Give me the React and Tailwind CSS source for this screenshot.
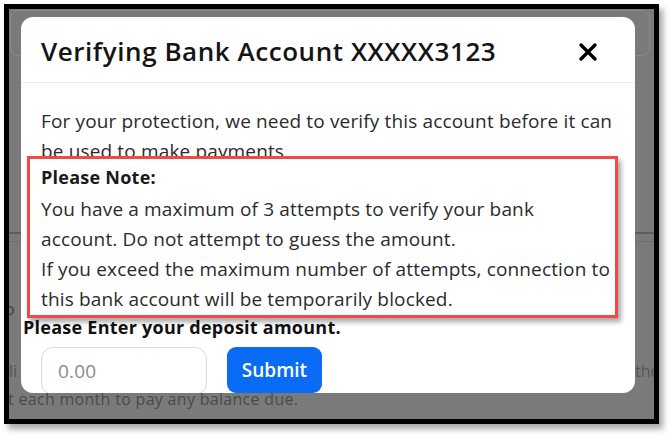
import React from 'react';

const font = { fontFamily: '"Open Sans", Lato, sans-serif' };

const Backdrop = () => (
  <div className="absolute inset-0 bg-[#7a7a7a] text-[16px]">
    {/* faint page content behind the overlay */}
    <div className="absolute left-[1px] top-[1px] w-[640px] h-[46px] rounded-[8px] border border-[#8a8a8a]" />
    <div className="absolute left-0 right-0 top-[223px] h-[2px] bg-[#5e5e5e]" />
    <div className="absolute left-0 right-0 top-[232px] h-[1px] bg-[#6e6e6e]" />
    <span className="absolute left-[-4px] top-[288px] text-[#3f3f3f]">o</span>
    <span className="absolute left-[0px] top-[350px] text-[#555]">li</span>
    <span className="absolute left-[626px] top-[350px] text-[#555]">tho</span>
    <span className="absolute left-[-1px] top-[378px] text-[#4a4a4a] tracking-[0.3px]">
      t each month to pay any balance due.
    </span>
  </div>
);

const CloseIcon = () => (
  <svg width="20" height="20" viewBox="0 0 20 20" className="text-black">
    <path d="M3 3 L17 17 M17 3 L3 17" stroke="currentColor" strokeWidth="3.4" strokeLinecap="round" />
  </svg>
);

const Modal = () => (
  <div className="absolute left-[12px] top-[8px] w-[614px] h-[376px] bg-white rounded-[12px] overflow-hidden">
    <div className="h-[66px] px-[20px] flex items-center justify-between border-b border-[#e8ecee]">
      <h2 className="text-[26px] font-semibold text-[#151515] tracking-[0.55px] pt-[4px]">
        Verifying Bank Account XXXXX3123
      </h2>
      <div className="mr-[17px] pt-[4px]">
        <CloseIcon />
      </div>
    </div>
    <div className="px-[20px] pt-[23px] text-[19px] tracking-[0.15px] text-[#2b2b2b] leading-[30px]">
      <p>For your protection, we need to verify this account before it can</p>
      <p>be used to make payments.</p>
      <div className="relative z-10 -mt-[10px] ml-[-14px] w-[591px] bg-white border-[3px] border-[#f24848] pl-[11px] pt-[3px] pb-[1px] shadow-[3px_4px_5px_rgba(0,0,0,0.35)]">
        <p className="font-bold text-[18px] tracking-[0.25px] text-[#1a1a1a]">Please Note:</p>
        <p className="mt-[2px]">You have a maximum of 3 attempts to verify your bank</p>
        <p>account. Do not attempt to guess the amount.</p>
        <p>If you exceed the maximum number of attempts, connection to</p>
        <p>this bank account will be temporarily blocked.</p>
      </div>
      <p className="ml-[-18px] -mt-[1px] leading-[20px] font-bold text-[18px] tracking-[0.25px] text-[#111]">
        Please Enter your deposit amount.
      </p>
      <div className="mt-[10px] flex items-start gap-[20px]">
        <div className="w-[166px] h-[48px] rounded-[12px] border border-[#d9d9d9] flex items-center pl-[16px] text-[#8a8a8a]">
          0.00
        </div>
        <button className="w-[95px] h-[46px] rounded-[9px] bg-[#0a6cf5] text-white text-[19px] tracking-normal font-semibold">
          Submit
        </button>
      </div>
    </div>
  </div>
);

export default function App() {
  return (
    <div className="w-[670px] h-[437px] bg-white overflow-hidden" style={font}>
      <div className="ml-[4px] mt-[4px] w-[655px] h-[420px] border-[5px] border-black shadow-[4px_5px_6px_rgba(0,0,0,0.35)]">
        <div className="relative w-full h-full overflow-hidden">
          <Backdrop />
          <Modal />
        </div>
      </div>
    </div>
  );
}
